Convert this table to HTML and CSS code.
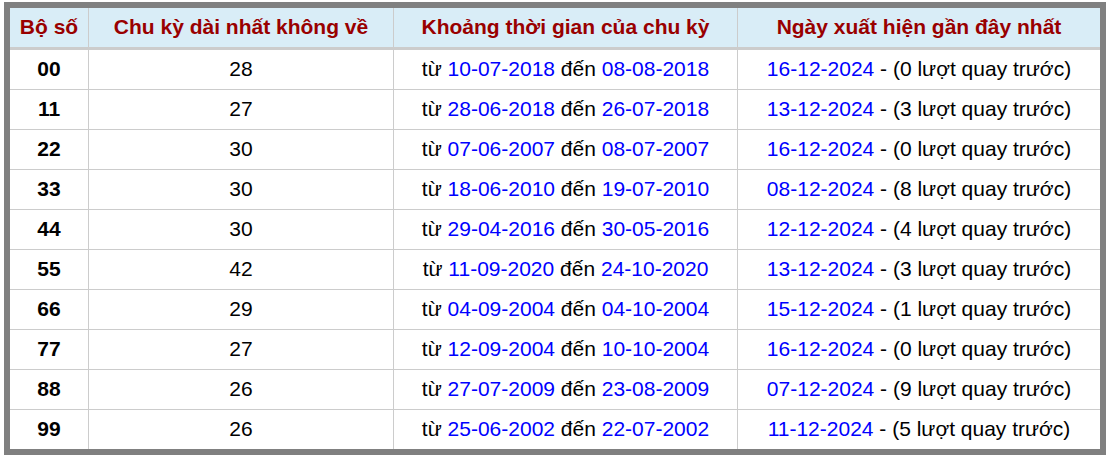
FILE: index.html
```html
<!DOCTYPE html>
<html lang="vi">
<head>
<meta charset="utf-8">
<link rel="stylesheet" href="styles.css">
</head>
<body>
<div class="frame">
  <div class="grid">
    <div class="th">Bộ số</div>
    <div class="th">Chu kỳ dài nhất không về</div>
    <div class="th">Khoảng thời gian của chu kỳ</div>
    <div class="th last">Ngày xuất hiện gần đây nhất</div>

    <div class="td num">00</div><div class="td">28</div><div class="td">từ <span class="d">10-07-2018</span> đến <span class="d">08-08-2018</span></div><div class="td last"><span class="d">16-12-2024</span> - (0 lượt quay trước)</div>
    <div class="td num">11</div><div class="td">27</div><div class="td">từ <span class="d">28-06-2018</span> đến <span class="d">26-07-2018</span></div><div class="td last"><span class="d">13-12-2024</span> - (3 lượt quay trước)</div>
    <div class="td num">22</div><div class="td">30</div><div class="td">từ <span class="d">07-06-2007</span> đến <span class="d">08-07-2007</span></div><div class="td last"><span class="d">16-12-2024</span> - (0 lượt quay trước)</div>
    <div class="td num">33</div><div class="td">30</div><div class="td">từ <span class="d">18-06-2010</span> đến <span class="d">19-07-2010</span></div><div class="td last"><span class="d">08-12-2024</span> - (8 lượt quay trước)</div>
    <div class="td num">44</div><div class="td">30</div><div class="td">từ <span class="d">29-04-2016</span> đến <span class="d">30-05-2016</span></div><div class="td last"><span class="d">12-12-2024</span> - (4 lượt quay trước)</div>
    <div class="td num">55</div><div class="td">42</div><div class="td">từ <span class="d">11-09-2020</span> đến <span class="d">24-10-2020</span></div><div class="td last"><span class="d">13-12-2024</span> - (3 lượt quay trước)</div>
    <div class="td num">66</div><div class="td">29</div><div class="td">từ <span class="d">04-09-2004</span> đến <span class="d">04-10-2004</span></div><div class="td last"><span class="d">15-12-2024</span> - (1 lượt quay trước)</div>
    <div class="td num">77</div><div class="td">27</div><div class="td">từ <span class="d">12-09-2004</span> đến <span class="d">10-10-2004</span></div><div class="td last"><span class="d">16-12-2024</span> - (0 lượt quay trước)</div>
    <div class="td num">88</div><div class="td">26</div><div class="td">từ <span class="d">27-07-2009</span> đến <span class="d">23-08-2009</span></div><div class="td last"><span class="d">07-12-2024</span> - (9 lượt quay trước)</div>
    <div class="td num bottom">99</div><div class="td bottom">26</div><div class="td bottom">từ <span class="d">25-06-2002</span> đến <span class="d">22-07-2002</span></div><div class="td last bottom"><span class="d">11-12-2024</span> - (5 lượt quay trước)</div>
  </div>
</div>
</body>
</html>
```

FILE: styles.css
```css
html, body {
  margin: 0;
  padding: 0;
  background: #ffffff;
}
body {
  padding: 2px 0 0 4px;
  font-family: "Liberation Sans", Arial, sans-serif;
  font-size: 21px;
  color: #000;
}
.frame {
  width: 1090px;
  border: 6px solid #808080;
  background: #fff;
}
.grid {
  display: grid;
  grid-template-columns: 79px 305px 344px 362px;
}
.th, .td {
  text-align: center;
  white-space: nowrap;
  height: 39px;
  line-height: 38px;
  border-right: 1px solid #cccccc;
}
.th {
  background: #d9edf7;
  color: #990000;
  font-weight: bold;
  border-bottom: 3px solid #cccccc;
}
.td {
  border-bottom: 1px solid #cccccc;
}
.last {
  border-right: none;
}
.bottom {
  border-bottom: none;
}
.num {
  font-weight: bold;
}
.d {
  color: #0000ff;
}
```
